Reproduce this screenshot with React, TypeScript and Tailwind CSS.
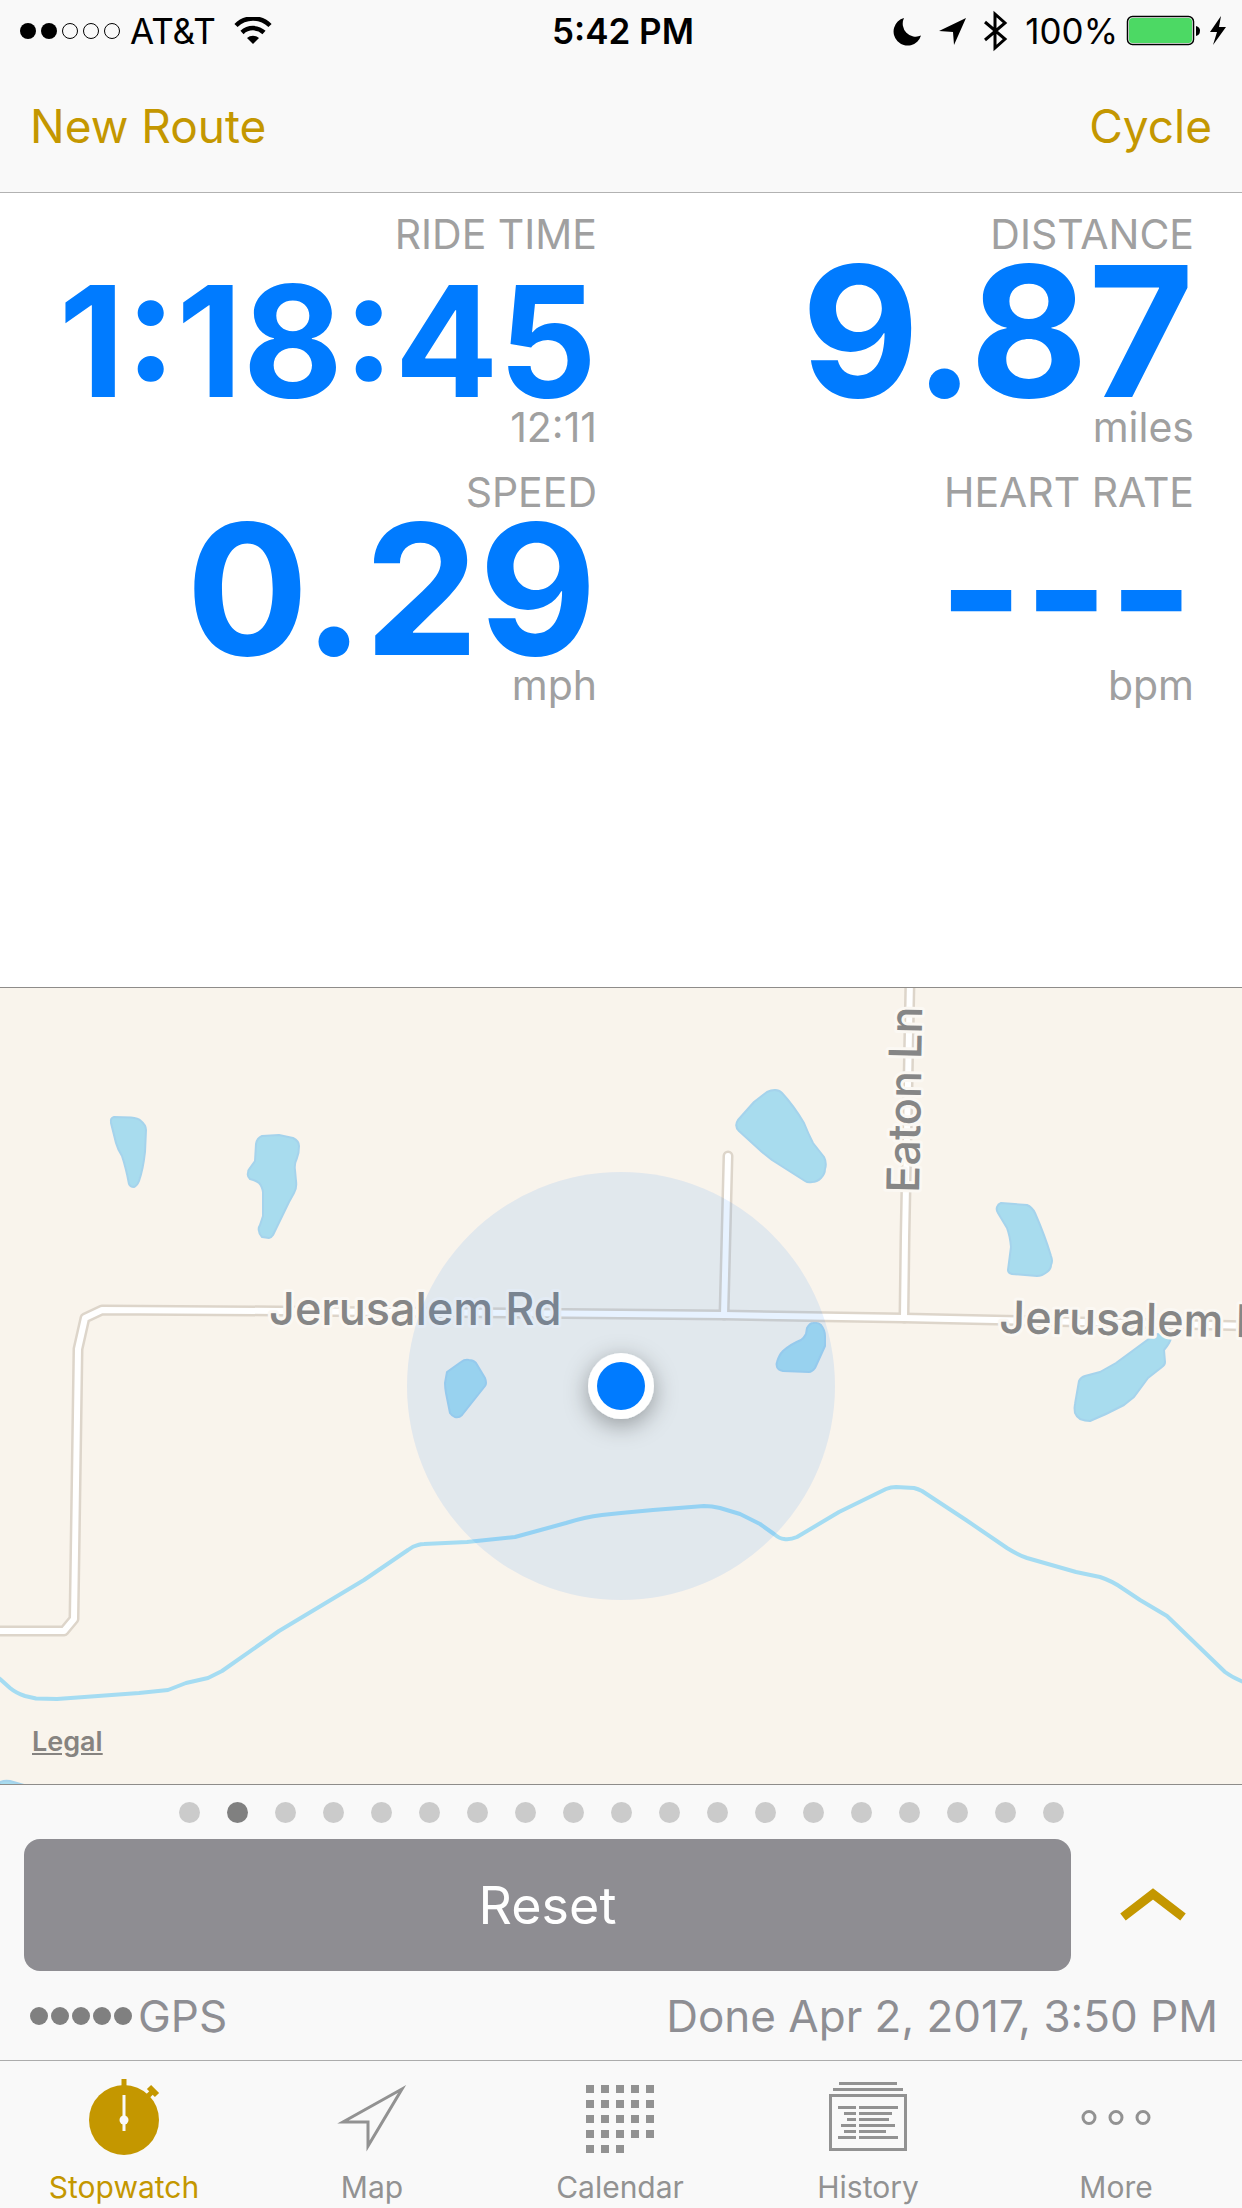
import type { ReactNode } from "react";

const metrics = [
  { label: "RIDE TIME", value: "1:18:45", unit: "12:11", size: "text-[154px]" },
  { label: "DISTANCE", value: "9.87", unit: "miles", size: "text-[182px]" },
  { label: "SPEED", value: "0.29", unit: "mph", size: "text-[182px]" },
  { label: "HEART RATE", value: "---", unit: "bpm", size: "text-[182px]" },
];

const PAGES = 19;
const CURRENT_PAGE = 1;

const ponds = [
  "M114 129L131 129.5Q138 130 141 133Q146 137 146 142L145 164Q143 182 139 193Q137 198 134 199Q130 199 129 196Q126 180 122 168Q118 162 116 155L111 135Q110 130 114 129Z",
  "M262 148L279 147L293 150Q299 153 299 158Q299 165 297 170Q294 176 295 182L296 193Q297 200 294 205L289 214L273 247Q271 250 269 250L262 249Q259 246 259 243Q258 240 260 237L263 228V204Q262 198 259 195Q255 192 250 191Q247 188 248 185Q248 182 250 180L255 173L256 156Q257 150 262 148Z",
  "M767 104Q771 102 775 102Q779 102 782 105Q794 118 804 135Q808 145 813 155L824 169Q827 175 825 181Q825 186 821 190Q817 194 812 194Q808 195 805 193L772 172L762 164L739 143Q734 138 738 132L754 114Z",
  "M997 219Q998 216 1001 215L1027 217Q1032 219 1035 225Q1045 248 1051 268Q1053 273 1051 277Q1051 281 1047 284Q1042 288 1037 288L1012 286Q1008 285 1008 282L1011 259Q1010 248 1007 240L998 225Q996 222 997 219Z",
  "M1156 346Q1163 346 1171 350Q1170 355 1164 362L1165 374Q1165 377 1162 379L1148 390L1134 409L1124 417Q1107 426 1090 433Q1085 433 1080 431Q1076 428 1075 425Q1074 420 1075 416L1079 393Q1081 389 1085 388L1100 384L1116 375L1150 350Z",
  "M447 384L461 374Q465 371 469 372Q473 372 476 375L485 390Q487 395 485 398L462 427Q459 430 455 429Q452 428 450 425L446 405Q445 399 445 395Z",
  "M807 340Q810 335 813 335Q818 334 821 337Q825 342 825 348V358L815 380Q812 384 809 384L783 383Q778 382 777 379Q776 376 777 374Q779 367 783 363Q791 356 801 352Q804 350 806 346Z",
  "M0 794Q5 792 10 793L24 797H0Z",
];

const roads = [
  "M724 327L728 168",
  "M904 330L905 250L910 -8",
  "M-10 643H64L74 631L78 361L85 330L102 322L277 323L621 326L724 327L904 330L1252 338",
];

const stream =
  "M-4 688L0 691L10 700Q16 705 25 708L36 710.5L57 711L139 705L168 702L186 695L208 690L222 683L279 643L319 619L364 592L408 562Q413 558 418 557Q421 556 424 556L467 554L515 549L566 535Q585 529 602 527L621 525L653 522L704 518Q712 518 720 520L740 526L760 536L774 546Q780 551 784 551Q790 552 797 549L839 524L886 501Q891 499 896 499L914 500Q918 501 922 503L966 532L1007 560Q1018 567 1027 570L1076 584L1100 589Q1112 593 1122 600L1140 612L1167 628L1225 684Q1233 690 1246 695";

function RouteMap() {
  return (
    <svg viewBox="0 0 1242 796" className="block h-auto w-full bg-[#f9f4ec]" role="img" aria-label="Map of Jerusalem Rd and Eaton Ln">
      <g fill="#a8dcee" stroke="#a5d3ec" strokeWidth="2" strokeLinejoin="round">
        {ponds.map((d) => (
          <path key={d} d={d} />
        ))}
      </g>
      <path d={stream} fill="none" stroke="#a5dcf2" strokeWidth="4" strokeLinejoin="round" />
      {/* casing first, then the road surface, so that junctions stay open */}
      <g fill="none" stroke="#ddd5ca" strokeWidth="11" strokeLinecap="round" strokeLinejoin="round">
        {roads.map((d) => (
          <path key={d} d={d} />
        ))}
      </g>
      <g fill="none" stroke="#ffffff" strokeWidth="6" strokeLinecap="round" strokeLinejoin="round">
        {roads.map((d) => (
          <path key={d} d={d} />
        ))}
      </g>
      <g
        fill="#868686"
        stroke="#fbf8f3"
        strokeWidth="6"
        strokeLinejoin="round"
        paintOrder="stroke"
        fontSize="45"
        className="font-medium"
      >
        <text x="269" y="337">Jerusalem Rd</text>
        <text x="999" y="345" transform="rotate(1 999 345)">Jerusalem Rd</text>
        <text x="919" y="205" transform="rotate(-89 919 205)">Eaton Ln</text>
      </g>

      {/* current location */}
      <defs>
        <filter id="puck-shadow" x="-100%" y="-100%" width="300%" height="300%">
          <feDropShadow dx="0" dy="6" stdDeviation="12" floodColor="#000000" floodOpacity="0.35" />
        </filter>
      </defs>
      <circle cx="621" cy="398" r="214" fill="#007aff" fillOpacity="0.095" />
      <circle cx="621" cy="398" r="33" fill="#ffffff" filter="url(#puck-shadow)" />
      <circle cx="621" cy="398" r="24" fill="#007bff" />
    </svg>
  );
}

function StatusBar() {
  return (
    <div className="grid h-[60px] grid-cols-[1fr_auto_1fr] items-center pt-0.5 pr-4 pl-5 text-[35px] text-black">
      <div className="flex items-center">
        <svg width="102" height="18" viewBox="0 0 102 18" aria-hidden="true">
          <circle cx="8" cy="9" r="8" />
          <circle cx="29" cy="9" r="8" />
          <g fill="none" stroke="#000000">
            <circle cx="50" cy="9" r="7.5" />
            <circle cx="71" cy="9" r="7.5" />
            <circle cx="92" cy="9" r="7.5" />
          </g>
        </svg>
        <span className="ml-2">AT&amp;T</span>
        <svg className="ml-[18px]" width="38" height="28" viewBox="0 0 38 28" aria-hidden="true">
          <g fill="none" stroke="#000000" strokeWidth="4.5">
            <path d="M2 8.5A24 24 0 0 1 36 8.5" />
            <path d="M8 15.500A16 16 0 0 1 30 15.500" />
          </g>
          <path d="M19 27L13 21A9 9 0 0 1 25 21Z" />
        </svg>
      </div>
      <time className="font-semibold">5:42 PM</time>
      <div className="flex items-center justify-end">
        <svg width="118" height="42" viewBox="0 0 118 42" aria-hidden="true">
          <path d="M11 8A14 14 0 1 0 28 25.500A13 13 0 0 1 11 8Z" />
          <path d="M73 8L46 21L60 22L61 35Z" />
          <path d="M92 12L112 29L102 38V4L112 13L92 30" fill="none" stroke="#000000" strokeWidth="3" />
        </svg>
        <span className="ml-3.5">100%</span>
        <svg className="ml-2" width="100" height="32" viewBox="0 0 100 32" aria-hidden="true">
          <rect x="1.500" y="1.500" width="66" height="28" rx="5" fill="#ffffff" stroke="#000000" strokeWidth="1.500" />
          <rect x="3" y="3" width="63" height="25" rx="3.500" fill="#4cd964" />
          <path d="M70 11Q74 12 74 15.500Q74 20 70 21Z" />
          <path d="M95 1L84 17H91L87 30L100 12H93Z" />
        </svg>
      </div>
    </div>
  );
}

function StopwatchIcon() {
  return (
    <>
      <circle cx="45" cy="50" r="35" fill="currentColor" />
      <path d="M45 9V18M66 29L74 21" stroke="currentColor" strokeWidth="5" />
      <path d="M70 17L78 25" stroke="currentColor" strokeWidth="6" />
      <path d="M45 25V61" stroke="#f9f9f9" strokeWidth="3" />
      <circle cx="45" cy="50" r="4.500" fill="#f9f9f9" />
    </>
  );
}

function MapIcon() {
  return <path d="M75 19L16 52H41V76Z" fill="none" stroke="currentColor" strokeWidth="3" strokeMiterlimit="12" />;
}

function CalendarIcon() {
  return (
    <g fill="currentColor">
      {Array.from({ length: 23 }, (_, i) => (
        <rect key={i} x={11 + (i % 5) * 15} y={15 + Math.floor(i / 5) * 15} width="8" height="8" />
      ))}
    </g>
  );
}

function HistoryIcon() {
  return (
    <g fill="none" stroke="currentColor" strokeWidth="3">
      <path d="M16 13.500H74M10 19.500H80" />
      <rect x="7.500" y="25.500" width="75" height="54" />
      <path d="M15 37.500H33M36 37.500H75M21 43.500H33M36 43.500H69M24 49.500H33M36 49.500H66M18 55.500H33M36 55.500H72M21 61.500H33M36 61.500H63M15 67.500H33M36 67.500H75" />
    </g>
  );
}

function MoreIcon() {
  return (
    <g fill="none" stroke="currentColor" strokeWidth="3">
      <circle cx="18" cy="47.500" r="6" />
      <circle cx="45" cy="47.500" r="6" />
      <circle cx="72" cy="47.500" r="6" />
    </g>
  );
}

const tabs: { label: string; icon: ReactNode; active?: boolean }[] = [
  { label: "Stopwatch", icon: <StopwatchIcon />, active: true },
  { label: "Map", icon: <MapIcon /> },
  { label: "Calendar", icon: <CalendarIcon /> },
  { label: "History", icon: <HistoryIcon /> },
  { label: "More", icon: <MoreIcon /> },
];

export default function App() {
  return (
    <div className="flex min-h-screen flex-col overflow-x-hidden bg-white font-['Inter','Liberation_Sans',sans-serif]">
      <header className="border-b border-[#b2b2b2] bg-[#f9f9f9]">
        <StatusBar />
        <nav className="flex h-[132px] items-center justify-between px-[30px] text-[46px] text-[#c49700]">
          <button type="button">New Route</button>
          <button type="button">Cycle</button>
        </nav>
      </header>

      <main className="flex flex-1 flex-col">
        <section className="grid flex-1 grid-cols-2 content-start pr-12">
          {metrics.map((m) => (
            <div key={m.label} className="pt-[17px] pb-[3px] text-right text-[41px] text-[#a0a0a0]">
              <h2 className="leading-[48px]">{m.label}</h2>
              {/* the paragraph's own size sets the baseline that all values share */}
              <p className="text-[180px] leading-[148px] font-bold text-[#007bff]">
                <span className={`${m.size} leading-[100px]`}>{m.value}</span>
              </p>
              <p className="leading-[42px]">{m.unit}</p>
            </div>
          ))}
        </section>

        <section className="relative border-y border-[#8e8c8a]">
          <RouteMap />
          <a href="#legal" className="absolute bottom-[22px] left-8 text-[27px] font-semibold text-[#868380] underline">
            Legal
          </a>
        </section>
      </main>

      <footer className="bg-[#f9f9f9]">
        <div className="flex justify-center gap-[27px] pt-[17px]">
          {Array.from({ length: PAGES }, (_, i) => (
            <button
              key={i}
              type="button"
              aria-label={`Page ${i + 1}`}
              className={`size-[21px] rounded-full ${i === CURRENT_PAGE ? "bg-[#808080]" : "bg-[#cbcbcb]"}`}
            />
          ))}
        </div>

        <div className="flex pt-4 pl-6">
          <button type="button" className="h-[132px] flex-1 rounded-2xl bg-[#8e8d92] pt-0.5 text-[52px] text-white">
            Reset
          </button>
          <button type="button" aria-label="Expand" className="flex w-[171px] items-center justify-center pr-2 text-[#c49700]">
            <svg width="68" height="36" viewBox="0 0 68 36" fill="none" stroke="currentColor" strokeWidth="9">
              <path d="M4 30L34 7L64 30" />
            </svg>
          </button>
        </div>

        <div className="flex h-[89px] items-center justify-between pr-6 pl-[30px] text-[44px] text-[#8e8e93]">
          <div className="flex items-center gap-1.5">
            <div className="flex gap-[3px]">
              {Array.from({ length: 5 }, (_, i) => (
                <span key={i} className="size-[18px] rounded-full bg-[#808080]" />
              ))}
            </div>
            <span>GPS</span>
          </div>
          <span>Done Apr 2, 2017, 3:50 PM</span>
        </div>

        <nav className="grid grid-cols-5 border-t border-[#acacac] pt-[9px] pr-0.5">
          {tabs.map((tab) => (
            <button
              key={tab.label}
              type="button"
              className={`flex flex-col items-center text-[30px] leading-[42px] ${tab.active ? "text-[#c49700]" : "text-[#929292]"}`}
            >
              <svg width="90" height="96" viewBox="0 0 90 96" aria-hidden="true">
                {tab.icon}
              </svg>
              {tab.label}
            </button>
          ))}
        </nav>
      </footer>
    </div>
  );
}
